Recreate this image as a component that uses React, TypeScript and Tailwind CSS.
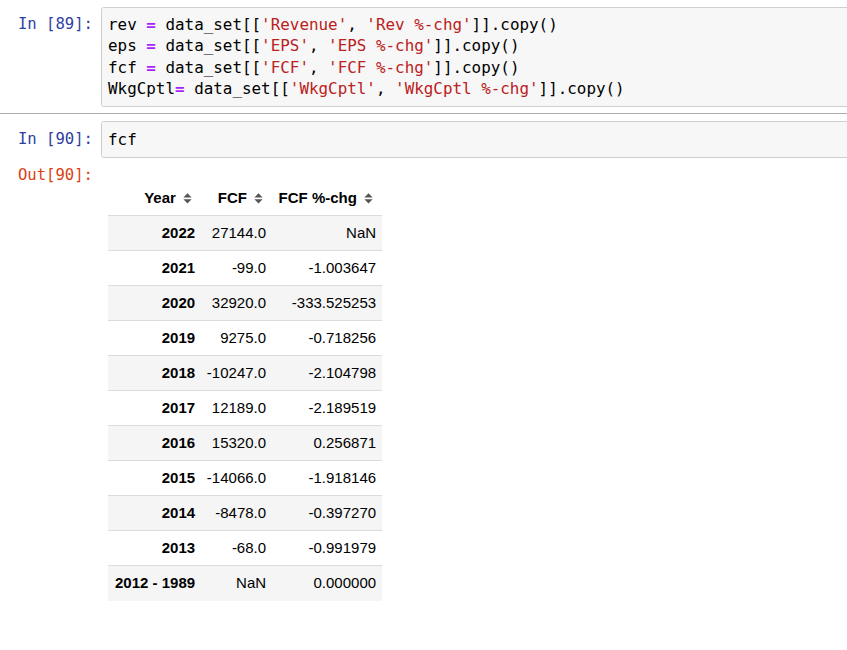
import React from "react";

const mono = { fontFamily: '"DejaVu Sans Mono", "Liberation Mono", monospace' };
const sans = { fontFamily: '"Liberation Sans", Arial, sans-serif' };

function S({ children }: { children: React.ReactNode }) {
  return <span className="text-[#ba2121]">{children}</span>;
}
function Eq() {
  return <span className="text-[#aa22ff] font-bold">=</span>;
}

function SortIcon() {
  return (
    <svg width="9" height="11" viewBox="0 0 9 11" className="inline-block ml-[7.5px] mr-[2.7px] align-[-1px]">
      <polygon points="4.5,0.3 8.6,4.5 0.4,4.5" fill="#555" />
      <polygon points="0.4,6.3 8.6,6.3 4.5,10.5" fill="#555" />
    </svg>
  );
}

const rows: [string, string, string][] = [
  ["2022", "27144.0", "NaN"],
  ["2021", "-99.0", "-1.003647"],
  ["2020", "32920.0", "-333.525253"],
  ["2019", "9275.0", "-0.718256"],
  ["2018", "-10247.0", "-2.104798"],
  ["2017", "12189.0", "-2.189519"],
  ["2016", "15320.0", "0.256871"],
  ["2015", "-14066.0", "-1.918146"],
  ["2014", "-8478.0", "-0.397270"],
  ["2013", "-68.0", "-0.991979"],
  ["2012 - 1989", "NaN", "0.000000"],
];

export default function App() {
  return (
    <div className="w-[847px] h-[650px] overflow-hidden bg-white">
      <div className="pt-[6.5px]">
        {/* Cell 89 */}
        <div className="flex">
          <div
            className="w-[101px] shrink-0 text-right pr-[8px] pt-[7.7px] text-[15.6px] leading-[21.25px] text-[#303f9f]"
            style={mono}
          >
            In [89]:
          </div>
          <div
            className="w-[760px] shrink-0 border border-[#cfcfcf] bg-[#f7f7f7] rounded-[2.5px] px-[6px] py-[6.7px] text-[15.9px] leading-[21.25px] text-black whitespace-pre"
            style={mono}
          >
            <div>
              rev <Eq /> data_set[[<S>'Revenue'</S>, <S>'Rev %-chg'</S>]].copy()
            </div>
            <div>
              eps <Eq /> data_set[[<S>'EPS'</S>, <S>'EPS %-chg'</S>]].copy()
            </div>
            <div>
              fcf <Eq /> data_set[[<S>'FCF'</S>, <S>'FCF %-chg'</S>]].copy()
            </div>
            <div>
              WkgCptl<Eq /> data_set[[<S>'WkgCptl'</S>, <S>'WkgCptl %-chg'</S>]].copy()
            </div>
          </div>
        </div>

        <div className="mt-[6.5px] h-px bg-[#ababab]" />

        {/* Cell 90 */}
        <div className="flex mt-[7px]">
          <div
            className="w-[101px] shrink-0 text-right pr-[8px] pt-[7.7px] text-[15.6px] leading-[21.25px] text-[#303f9f]"
            style={mono}
          >
            In [90]:
          </div>
          <div
            className="w-[760px] shrink-0 border border-[#cfcfcf] bg-[#f7f7f7] rounded-[2.5px] px-[6px] py-[6.7px] text-[15.9px] leading-[21.25px] text-black whitespace-pre"
            style={mono}
          >
            fcf
          </div>
        </div>

        {/* Output */}
        <div className="flex">
          <div
            className="w-[101px] shrink-0 text-right pr-[8px] pt-[6.5px] text-[15.6px] leading-[21.25px] text-[#d84315]"
            style={mono}
          >
            Out[90]:
          </div>
          <div className="pt-[22.5px] pl-[7px]" style={sans}>
            <table className="border-collapse text-[15px] text-black">
              <thead>
                <tr className="h-[35px] border-b border-[#dcdcdc]">
                  <th className="w-[93px] text-right pr-[6px] font-bold align-middle whitespace-nowrap">
                    Year<SortIcon />
                  </th>
                  <th className="w-[71px] text-right pr-[6px] font-bold align-middle whitespace-nowrap">
                    FCF<SortIcon />
                  </th>
                  <th className="w-[110px] text-right pr-[6px] font-bold align-middle whitespace-nowrap">
                    FCF %-chg<SortIcon />
                  </th>
                </tr>
              </thead>
              <tbody>
                {rows.map((r, i) => (
                  <tr
                    key={r[0]}
                    className={
                      "h-[35px] " +
                      (i % 2 === 0 ? "bg-[#f5f5f5]" : "bg-white") +
                      (i < rows.length - 1 ? " border-b border-[#dcdcdc]" : "")
                    }
                  >
                    <td className="text-right pr-[6px] pl-[7px] font-bold align-middle whitespace-nowrap">{r[0]}</td>
                    <td className="text-right pr-[6px] align-middle whitespace-nowrap">{r[1]}</td>
                    <td className="text-right pr-[6px] align-middle whitespace-nowrap">{r[2]}</td>
                  </tr>
                ))}
              </tbody>
            </table>
          </div>
        </div>
      </div>
    </div>
  );
}
